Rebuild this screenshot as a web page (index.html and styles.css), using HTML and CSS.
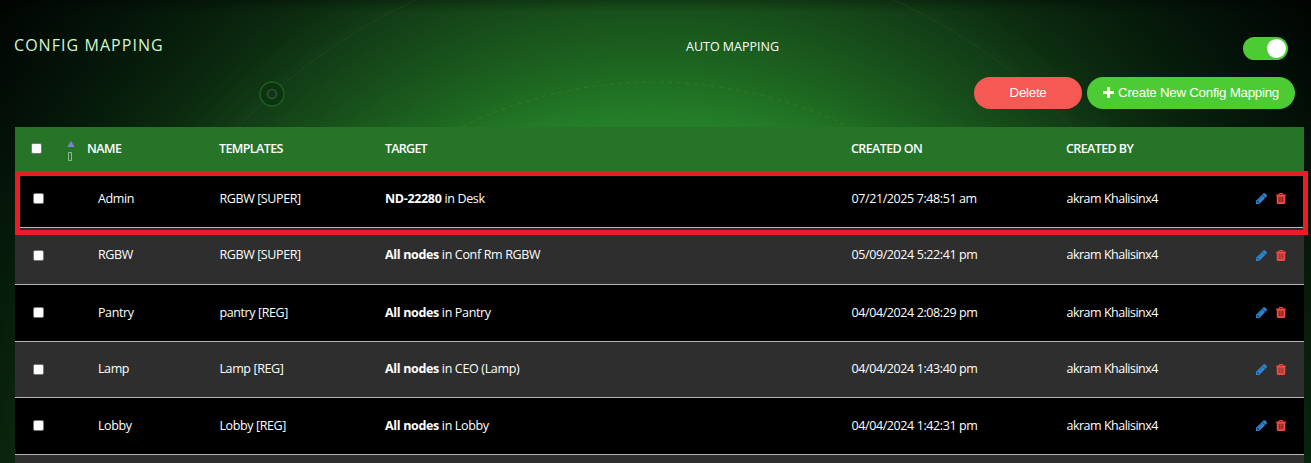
FILE: index.html
```
<!DOCTYPE html>
<html lang="en">
<head>
<meta charset="utf-8">
<title>Config Mapping</title>
<link rel="stylesheet" href="styles.css">
</head>
<body>
<svg class="backdrop" width="1311" height="463" viewBox="0 0 1311 463" fill="none" aria-hidden="true">
  <circle cx="655" cy="523" r="575" stroke="#2d6b2d" stroke-opacity=".25"/>
  <circle cx="655" cy="523" r="441" stroke="#4b8a36" stroke-opacity=".4" stroke-dasharray="4 4.5"/>
  <circle cx="272" cy="94" r="12" fill="#0e3212" stroke="#1b6120" stroke-width="1.5"/>
  <circle cx="272" cy="94" r="4.5" fill="#182e25" stroke="#1b6120" stroke-width="1.7"/>
</svg>
<svg class="symbols" aria-hidden="true">
  <symbol id="pencil" viewBox="128 128 1536 1536"><path d="M491 1536l91-91-235-235-91 91v107h128v128h107zm523-928q0-22-22-22-10 0-17 7l-542 542q-7 7-7 17 0 22 22 22 10 0 17-7l542-542q7-7 7-17zm-54-192l416 416-832 832h-416v-416zm683 96q0 53-37 90l-166 166-416-416 166-165q36-38 90-38 53 0 91 38l235 234q37 39 37 91z"/></symbol>
  <symbol id="trash" viewBox="0 128 1408 1536"><path d="M512 1376v-704q0-14-9-23t-23-9h-64q-14 0-23 9t-9 23v704q0 14 9 23t23 9h64q14 0 23-9t9-23zm256 0v-704q0-14-9-23t-23-9h-64q-14 0-23 9t-9 23v704q0 14 9 23t23 9h64q14 0 23-9t9-23zm256 0v-704q0-14-9-23t-23-9h-64q-14 0-23 9t-9 23v704q0 14 9 23t23 9h64q14 0 23-9t9-23zm-544-992h448l-48-117q-7-9-17-11h-317q-10 2-17 11zm928 32v64q0 14-9 23t-23 9h-96v948q0 83-47 143.5t-113 60.5h-832q-66 0-113-58.5t-47-141.5v-952h-96q-14 0-23-9t-9-23v-64q0-14 9-23t23-9h309l70-167q15-37 54-63t79-26h320q40 0 79 26t54 63l70 167h309q14 0 23 9t9 23z"/></symbol>
</svg>
<main class="page">
  <header class="top">
    <h1 class="title">CONFIG MAPPING</h1>
    <span class="auto">AUTO MAPPING</span>
    <span class="toggle"><span class="knob"></span></span>
  </header>
  <div class="actions">
    <button class="btn delete">Delete</button>
    <button class="btn create"><svg class="plus" width="11" height="11" viewBox="0 0 11 11"><path d="M4 0h3v4h4v3H7v4H4V7H0V4h4z" fill="#fff"/></svg>Create New Config Mapping</button>
  </div>
  <section class="table">
    <div class="row head">
      <input class="check" type="checkbox">
      <svg class="sort" width="8" height="20" viewBox="0 0 8 20"><path d="M4 0l3.7 6H.3z" fill="#7c80db"/><path d="M1.5 11.5h3v8h-3z" fill="none" stroke="#8fbb90"/></svg>
      <span class="name">NAME</span><span class="tpl">TEMPLATES</span><span class="target">TARGET</span><span class="date">CREATED ON</span><span class="by">CREATED BY</span>
    </div>
    <div class="row">
      <input class="check" type="checkbox"><span class="name">Admin</span><span class="tpl">RGBW [SUPER]</span><span class="target"><b>ND-22280</b> in Desk</span><span class="date">07/21/2025 7:48:51 am</span><span class="by">akram Khalisinx4</span>
      <span class="tools"><svg class="pencil"><use href="#pencil"/></svg><svg class="trash"><use href="#trash"/></svg></span>
    </div>
    <div class="row alt raised">
      <input class="check" type="checkbox"><span class="name">RGBW</span><span class="tpl">RGBW [SUPER]</span><span class="target"><b>All nodes</b> in Conf Rm RGBW</span><span class="date">05/09/2024 5:22:41 pm</span><span class="by">akram Khalisinx4</span>
      <span class="tools"><svg class="pencil"><use href="#pencil"/></svg><svg class="trash"><use href="#trash"/></svg></span>
    </div>
    <div class="row">
      <input class="check" type="checkbox"><span class="name">Pantry</span><span class="tpl">pantry [REG]</span><span class="target"><b>All nodes</b> in Pantry</span><span class="date">04/04/2024 2:08:29 pm</span><span class="by">akram Khalisinx4</span>
      <span class="tools"><svg class="pencil"><use href="#pencil"/></svg><svg class="trash"><use href="#trash"/></svg></span>
    </div>
    <div class="row alt short">
      <input class="check" type="checkbox"><span class="name">Lamp</span><span class="tpl">Lamp [REG]</span><span class="target"><b>All nodes</b> in CEO (Lamp)</span><span class="date">04/04/2024 1:43:40 pm</span><span class="by">akram Khalisinx4</span>
      <span class="tools"><svg class="pencil"><use href="#pencil"/></svg><svg class="trash"><use href="#trash"/></svg></span>
    </div>
    <div class="row">
      <input class="check" type="checkbox"><span class="name">Lobby</span><span class="tpl">Lobby [REG]</span><span class="target"><b>All nodes</b> in Lobby</span><span class="date">04/04/2024 1:42:31 pm</span><span class="by">akram Khalisinx4</span>
      <span class="tools"><svg class="pencil"><use href="#pencil"/></svg><svg class="trash"><use href="#trash"/></svg></span>
    </div>
    <div class="row alt last"></div>
    <div class="highlight"></div>
  </section>
</main>
</body>
</html>
```
FILE: styles.css
```
* { box-sizing: border-box; }
body {
  margin: 0;
  height: 463px;
  overflow: hidden;
  color: #fff;
  font: 12.5px/18px "Open Sans", "Noto Sans", sans-serif;
  background:
    linear-gradient(rgba(0,0,0,.25), transparent 12px),
    radial-gradient(circle at 655px 523px, #268b2b 370px, #237c27 410px, #1d6520 460px, #18501b 515px, #133f17 565px, #0c2c10 620px, #08200c 670px, #041409 735px, #010402 838px);
}
.backdrop { position: absolute; left: 0; top: 0; }
.symbols { position: absolute; width: 0; height: 0; }
.page { position: relative; padding: 0 7px 0 15px; }
.top { display: grid; grid-template-columns: 671px 557px 45px; height: 77px; padding-top: 37px; }
.title { margin: -1px 0 0 -1px; font-size: 16px; line-height: 18px; font-weight: 400; letter-spacing: 1.05px; color: #d2f8cf; }
.auto { letter-spacing: 0; padding-top: 1px; }
.toggle { width: 45px; height: 23px; padding: 2px; border-radius: 12px; background: #4dcb35; display: flex; justify-content: flex-end; }
.knob { width: 19px; height: 19px; border-radius: 50%; background: #fff; }
.actions { display: flex; justify-content: flex-end; gap: 5px; padding-right: 9px; height: 50px; }
.btn { height: 32px; border: 0; border-radius: 16px; padding: 0 0 1px; color: #fff; font: 13.33px "Liberation Sans", Arial, sans-serif; letter-spacing: -.26px; display: flex; align-items: center; justify-content: center; }
.delete { width: 108px; background: #f65854; }
.create { width: 208px; gap: 4px; background: #4dcb35; }
.table { position: relative; width: 1289px; }
.row {
  display: grid;
  grid-template-columns: 18px 65px 121.5px 165.5px 466.5px 215px 189px 1fr;
  height: 57px;
  align-items: center;
  background: #000;
  border-bottom: 1px solid #b5b5b5;
  padding-bottom: 1px;
  letter-spacing: -.4px;
}
.alt { background: #2e2e2e; }
.raised { padding-bottom: 2px; }
.short { height: 56px; }
.last { height: 8px; border: 0; }
.target { letter-spacing: -.34px; }
.by { letter-spacing: -.5px; }
.head { height: 44px; background: #257427; border: 0; padding: 0; font-weight: 600; grid-template-columns: 16px 36px 20px 132px 166px 466px 215px 1fr; }
.head .check { grid-column: 2; margin-top: -2px; }
.head .name { letter-spacing: -.55px; }
.head .tpl { letter-spacing: -.6px; }
.head .target { letter-spacing: -.75px; }
.head .date, .head .by { letter-spacing: -.6px; }
.check { grid-column: 2; appearance: none; margin: 0; width: 11px; height: 11px; border: 1px solid #777; border-radius: 2px; background: #fff; }
.sort { margin-top: 4px; }
.tools { display: flex; gap: 9px; align-items: center; }
.pencil { width: 11px; height: 11px; fill: #2f86d0; stroke: #2f86d0; stroke-width: 60; }
.trash { width: 10px; height: 11px; fill: #f44a45; stroke: #f44a45; stroke-width: 50; }
.highlight { position: absolute; left: 0; top: 44px; width: 1293px; height: 64px; border: 5px solid #ed1c24; }
```
